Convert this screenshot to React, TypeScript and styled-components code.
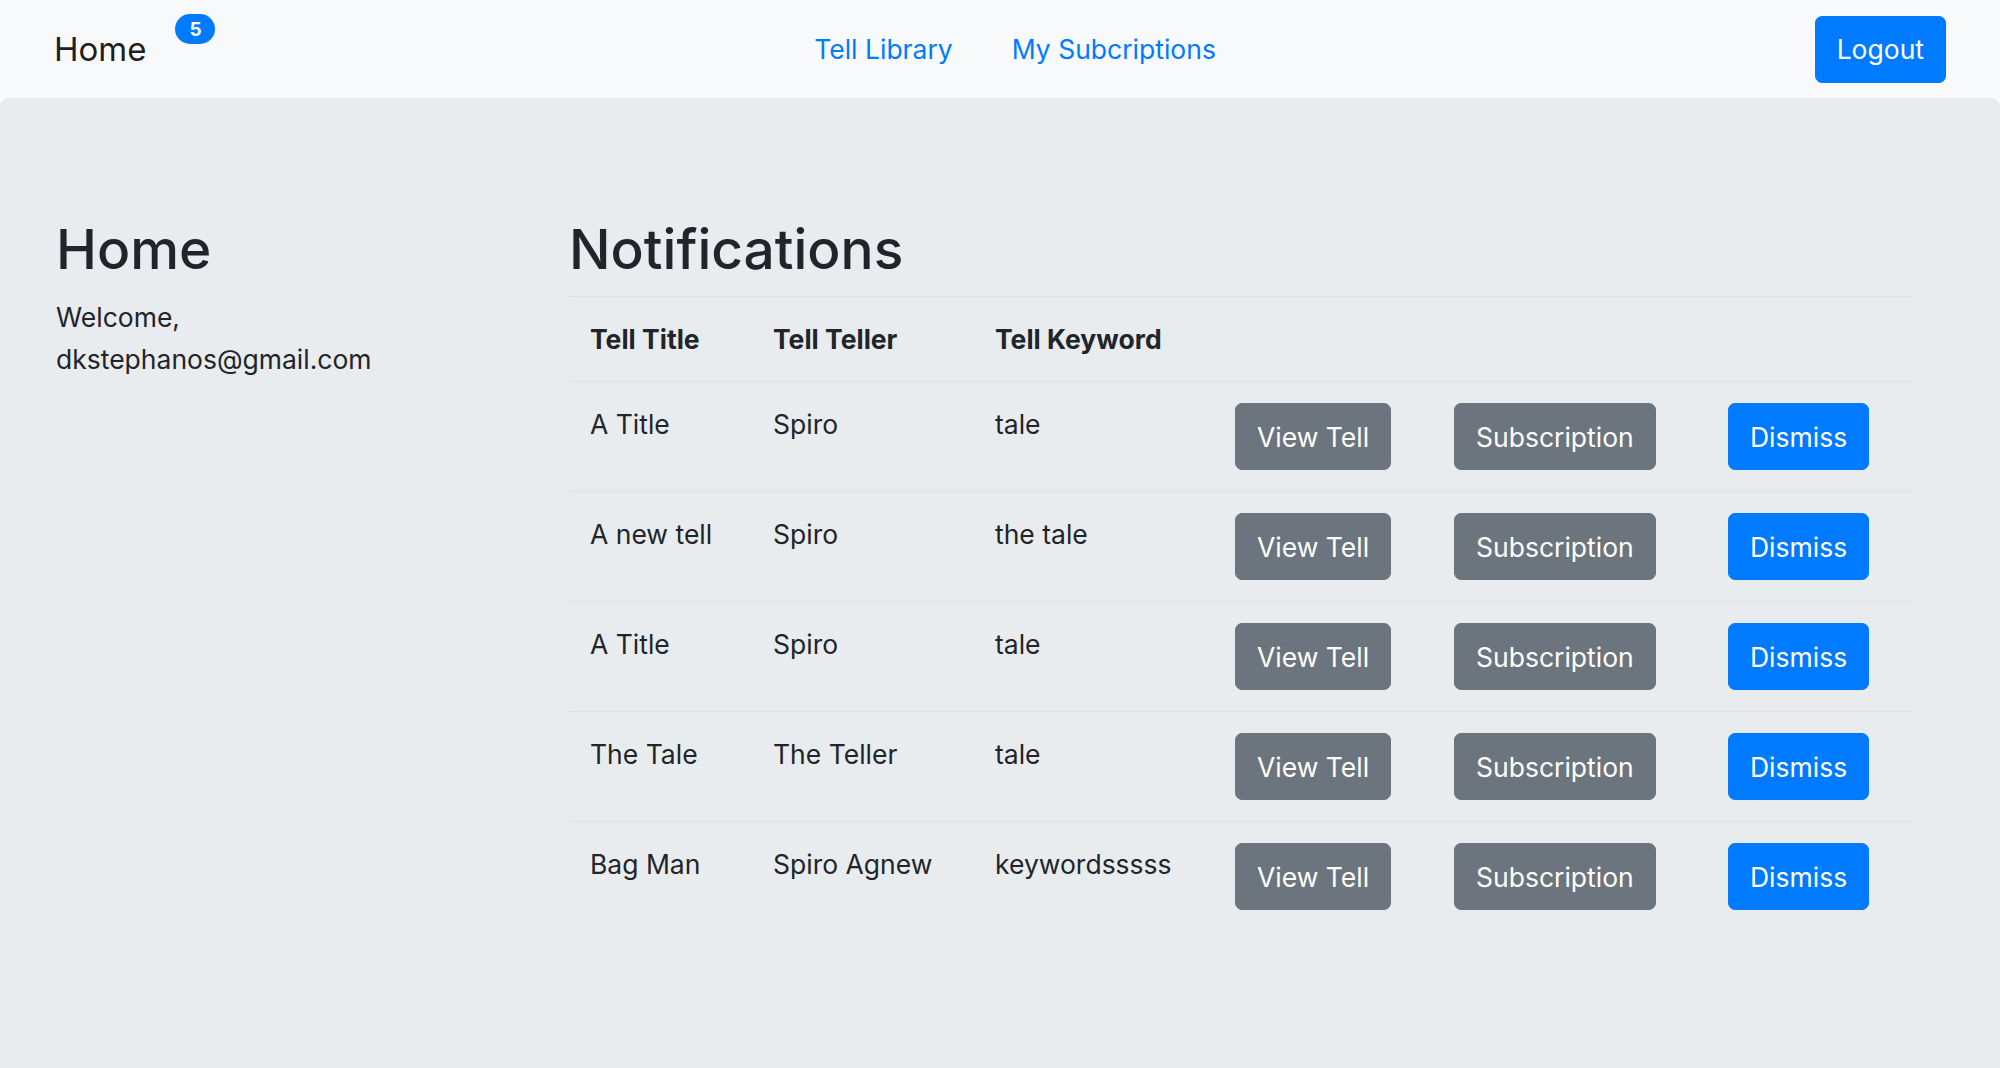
import React from "react";
import styled, { createGlobalStyle } from "styled-components";

const GlobalStyle = createGlobalStyle`
  html, body { margin: 0; padding: 0; }
  body {
    font-family: Inter, "Liberation Sans", Arial, sans-serif;
    font-size: 26.5px;
    line-height: 42px;
    color: #212529;
    background: #ffffff;
  }
  * { box-sizing: border-box; }
`;

const NavBar = styled.nav`
  display: flex;
  align-items: center;
  height: 98px;
  padding: 14px 54px;
  background: #f8f9fa;
`;

const Brand = styled.a`
  font-size: 33px;
  line-height: 52px;
  color: rgba(0, 0, 0, 0.9);
  text-decoration: none;
  margin-right: 29px;
`;

const Badge = styled.span`
  align-self: flex-start;
  display: inline-flex;
  align-items: center;
  justify-content: center;
  width: 40px;
  height: 30px;
  border-radius: 15px;
  background: #007bff;
  color: #fff;
  font-size: 19px;
  font-weight: 700;
  line-height: 1;
`;

const NavLinks = styled.div`
  display: flex;
  gap: 59px;
  margin: 0 auto;
`;

const NavLink = styled.a`
  color: #007bff;
  text-decoration: none;
  font-size: 26.5px;
`;

const Button = styled.button<{ $variant: "primary" | "secondary" }>`
  font-family: inherit;
  font-size: 26.5px;
  line-height: 42px;
  padding: 11.5px 21px;
  border-radius: 7px;
  border: 1px solid ${(p) => (p.$variant === "primary" ? "#007bff" : "#6c757d")};
  background: ${(p) => (p.$variant === "primary" ? "#007bff" : "#6c757d")};
  color: #fff;
  cursor: pointer;
  white-space: nowrap;
`;

const Jumbotron = styled.main`
  background: #e9ecef;
  border-radius: 8px 8px 0 0;
  min-height: 970px;
  padding: 118px 86px 112px 56px;
  display: grid;
  grid-template-columns: 513px 1fr;
  align-items: start;
`;

const Heading = styled.h1`
  margin: 0 0 14px;
  font-size: 55px;
  line-height: 66px;
  font-weight: 500;
`;

const Welcome = styled.p`
  margin: 0;
`;

const Table = styled.table`
  width: 100%;
  border-collapse: collapse;
  table-layout: fixed;
`;

const HeadCell = styled.th`
  text-align: left;
  font-weight: 700;
  padding: 21px;
  border-top: 1px solid #dee2e6;
  border-bottom: 1px solid #dee2e6;
  vertical-align: bottom;
  white-space: nowrap;
`;

const Cell = styled.td`
  padding: 21px;
  border-top: 1px solid #dee2e6;
  vertical-align: top;
  white-space: nowrap;
`;

const rows = [
  { title: "A Title", teller: "Spiro", keyword: "tale" },
  { title: "A new tell", teller: "Spiro", keyword: "the tale" },
  { title: "A Title", teller: "Spiro", keyword: "tale" },
  { title: "The Tale", teller: "The Teller", keyword: "tale" },
  { title: "Bag Man", teller: "Spiro Agnew", keyword: "keywordsssss" },
];

const colWidths = [183, 222, 240, 219, 274, 207];

export default function App() {
  return (
    <>
      <GlobalStyle />
      <NavBar>
        <Brand href="#">Home</Brand>
        <Badge>5</Badge>
        <NavLinks>
          <NavLink href="#">Tell Library</NavLink>
          <NavLink href="#">My Subcriptions</NavLink>
        </NavLinks>
        <Button $variant="primary">Logout</Button>
      </NavBar>
      <Jumbotron>
        <div>
          <Heading>Home</Heading>
          <Welcome>
            Welcome,
            <br />
            dkstephanos@gmail.com
          </Welcome>
        </div>
        <div>
          <Heading>Notifications</Heading>
          <Table>
            <colgroup>
              {colWidths.map((w, i) => (
                <col key={i} style={{ width: w }} />
              ))}
            </colgroup>
            <thead>
              <tr>
                <HeadCell>Tell Title</HeadCell>
                <HeadCell>Tell Teller</HeadCell>
                <HeadCell>Tell Keyword</HeadCell>
                <HeadCell />
                <HeadCell />
                <HeadCell />
              </tr>
            </thead>
            <tbody>
              {rows.map((r, i) => (
                <tr key={i}>
                  <Cell>{r.title}</Cell>
                  <Cell>{r.teller}</Cell>
                  <Cell>{r.keyword}</Cell>
                  <Cell>
                    <Button $variant="secondary">View Tell</Button>
                  </Cell>
                  <Cell>
                    <Button $variant="secondary">Subscription</Button>
                  </Cell>
                  <Cell>
                    <Button $variant="primary">Dismiss</Button>
                  </Cell>
                </tr>
              ))}
            </tbody>
          </Table>
        </div>
      </Jumbotron>
    </>
  );
}
